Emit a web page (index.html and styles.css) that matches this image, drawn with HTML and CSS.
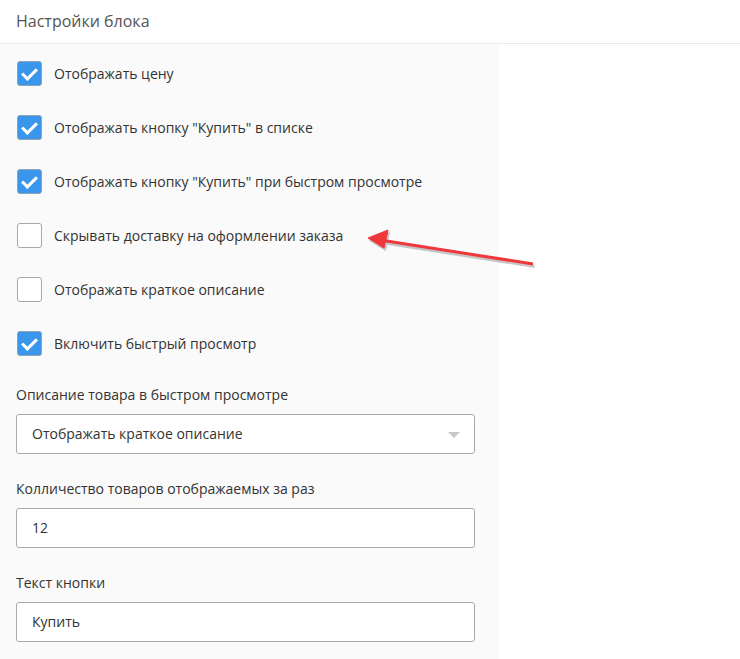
FILE: index.html
```html
<!DOCTYPE html>
<html lang="ru">
<head>
    <meta charset="UTF-8">
    <meta name="viewport" content="width=device-width, initial-scale=1.0">
    <title>Настройки блока</title>
    <link rel="stylesheet" href="styles.css">
</head>
<body>
    <header class="panel-header">Настройки блока</header>
    <div class="settings">
        <div class="options">
            <label class="option"><span class="box checked"></span>Отображать цену</label>
            <label class="option"><span class="box checked"></span>Отображать кнопку "Купить" в списке</label>
            <label class="option"><span class="box checked"></span>Отображать кнопку "Купить" при быстром просмотре</label>
            <label class="option"><span class="box"></span>Скрывать доставку на оформлении заказа</label>
            <label class="option"><span class="box"></span>Отображать краткое описание</label>
            <label class="option"><span class="box checked"></span>Включить быстрый просмотр</label>
        </div>
        <div class="field">
            <div class="field-label">Описание товара в быстром просмотре</div>
            <div class="input select">Отображать краткое описание<span class="caret"></span></div>
        </div>
        <div class="field">
            <div class="field-label">Колличество товаров отображаемых за раз</div>
            <div class="input">12</div>
        </div>
        <div class="field">
            <div class="field-label">Текст кнопки</div>
            <div class="input">Купить</div>
        </div>
    </div>
    <svg class="pointer" width="740" height="659" viewBox="0 0 740 659">
        <g transform="translate(1.5,2.5)" fill="#9a9a9a" stroke="#9a9a9a" opacity="0.55">
            <line x1="533" y1="264" x2="380" y2="240" stroke-width="3"/>
            <polygon points="368,238 388,230 384,248"/>
        </g>
        <g fill="#f0373b" stroke="#f0373b">
            <line x1="533" y1="264" x2="380" y2="240" stroke-width="3"/>
            <polygon points="368,238 388,230 384,248" stroke-width="1"/>
        </g>
    </svg>
</body>
</html>
```

FILE: styles.css
```css
body {
    margin: 0;
    font-family: "Open Sans", Arial, sans-serif;
    font-size: 14px;
    color: #333;
    background-color: #fff;
}
.panel-header {
    height: 43px;
    line-height: 43px;
    padding-left: 16px;
    font-size: 16px;
    color: #555;
    border-bottom: 1px solid #e9e9e9;
}
.settings {
    width: 499px;
    box-sizing: border-box;
    padding: 17px 24px 16px 16px;
    background-color: #fafafa;
    min-height: 615px;
}
.options {
    display: flex;
    flex-direction: column;
    gap: 29px;
    padding-left: 1px;
    margin-bottom: 29px;
}
.option {
    display: flex;
    align-items: center;
    gap: 12px;
    height: 25px;
}
.box {
    width: 25px;
    height: 25px;
    box-sizing: border-box;
    border: 1px solid #a8a8a8;
    border-radius: 3px;
    background-color: #fff;
}
.box.checked {
    background-color: #3996ea;
    border-color: #8fa3b5;
    position: relative;
}
.box.checked::after {
    content: "";
    position: absolute;
    left: 7px;
    top: 3px;
    width: 6px;
    height: 12px;
    border: solid #fff;
    border-width: 0 3px 3px 0;
    transform: rotate(45deg);
}
.field {
    margin-bottom: 25px;
}
.field-label {
    line-height: 20px;
    margin-bottom: 9px;
}
.input {
    height: 40px;
    box-sizing: border-box;
    border: 1px solid #aaa;
    border-radius: 3px;
    background-color: #fff;
    padding-left: 15px;
    line-height: 38px;
    position: relative;
}
.caret {
    position: absolute;
    right: 14px;
    top: 17px;
    width: 0;
    height: 0;
    border-left: 6px solid transparent;
    border-right: 6px solid transparent;
    border-top: 6px solid #c8c8c8;
}
.pointer {
    position: absolute;
    left: 0;
    top: 0;
    pointer-events: none;
}
```
